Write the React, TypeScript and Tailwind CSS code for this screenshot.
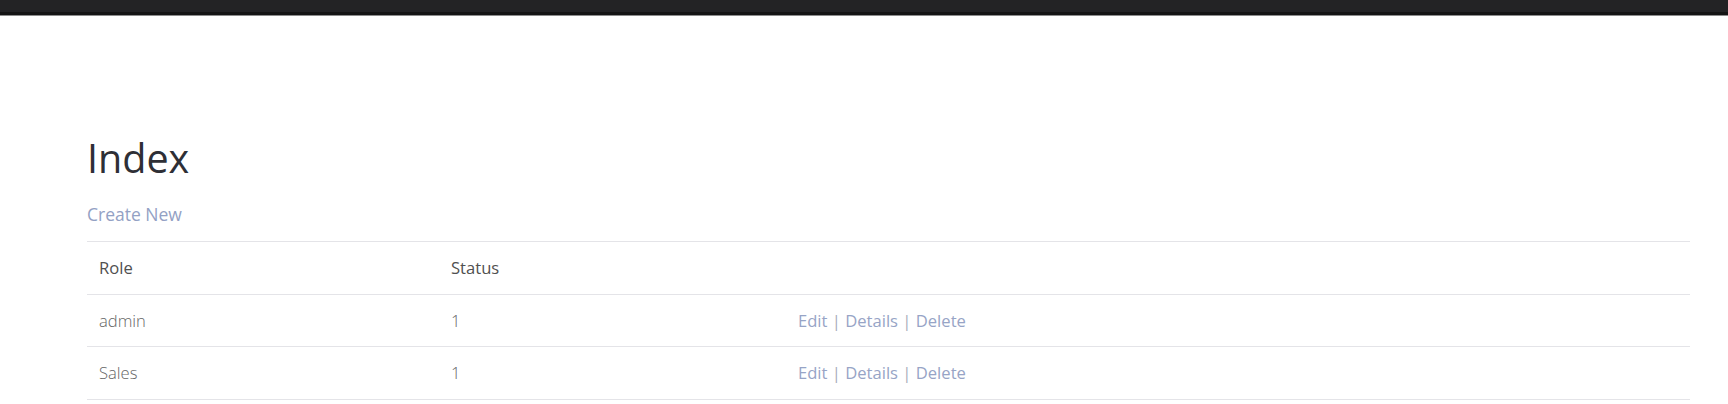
const roles = [
  { name: "admin", status: 1 },
  { name: "Sales", status: 1 },
]

export default function App() {
  return (
    <div className="min-h-screen bg-white font-['Open_Sans',sans-serif]">
      {/* top navbar */}
      <div className="h-[16px] bg-[#232325] border-b border-[#8c8c8c]">
        <div className="h-[12px]" />
        <div className="h-[3px] bg-[#141414]" />
      </div>

      <div className="pl-[87px] pr-[38px] pt-[121px]">
        <h2 className="text-[39.5px] leading-[43px] text-[#2e2f36]">Index</h2>
        <p className="mt-[22px] text-[17.5px] leading-[24px]">
          <a className="text-[#93a1c4]">Create New</a>
        </p>

        <table className="mt-[15px] w-full border-collapse text-[16.6px] leading-[23.6px]">
          <thead>
            <tr className="border-t border-b border-[#e4e4e8]">
              <th className="w-[352px] px-[12px] py-[14px] text-left font-normal text-[#505050]">Role</th>
              <th className="w-[347px] px-[12px] py-[14px] text-left font-normal text-[#505050]">Status</th>
              <th className="px-[12px] py-[14px]"></th>
            </tr>
          </thead>
          <tbody>
            {roles.map((r) => {
              return (
                <tr key={r.name} className="border-b border-[#e4e4e8]">
                  <td className="px-[12px] py-[14px] font-light text-[#666]">{r.name}</td>
                  <td className="px-[12px] py-[14px] font-light text-[#666]">{r.status}</td>
                  <td className="px-[12px] py-[14px] text-[#97a4c6]">
                    <a>Edit</a> <span className="text-[#a8acba]">|</span> <a>Details</a>{" "}
                    <span className="text-[#a8acba]">|</span> <a>Delete</a>
                  </td>
                </tr>
              )
            })}
          </tbody>
        </table>
      </div>
    </div>
  )
}
